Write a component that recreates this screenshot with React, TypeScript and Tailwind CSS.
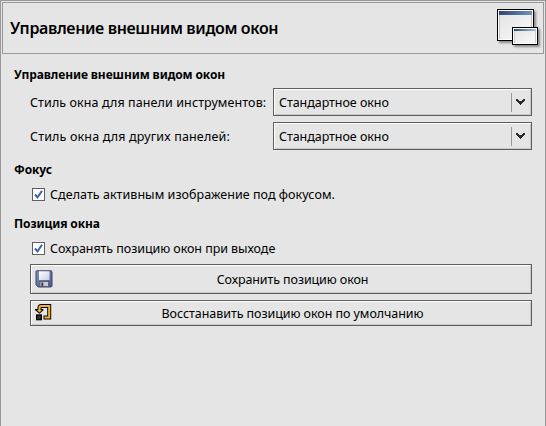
import type { ReactNode } from "react";

function WindowsIcon() {
  return (
    <svg width="46" height="42" viewBox="0 0 46 42" className="mr-px block shrink-0" shapeRendering="crispEdges">
      <defs>
        <linearGradient id="bar" x1="0" x2="1">
          <stop offset="0" stopColor="#2b4672" />
          <stop offset="1" stopColor="#7490bb" />
        </linearGradient>
        <linearGradient id="barSmall" x1="0" x2="1">
          <stop offset="0" stopColor="#2a5072" />
          <stop offset="1" stopColor="#a5c5dc" />
        </linearGradient>
        <linearGradient id="pane" x1="0" y1="0" x2="1" y2="1">
          <stop offset="0" stopColor="#e2e2e2" />
          <stop offset="1" stopColor="#fafafa" />
        </linearGradient>
        <filter id="soft" x="-20%" y="-20%" width="150%" height="150%">
          <feGaussianBlur stdDeviation="1" />
        </filter>
      </defs>
      <rect x="3" y="3" width="37" height="32" fill="#000" opacity=".4" filter="url(#soft)" />
      <rect x="1" y="1" width="37" height="32" fill="#000" />
      <rect x="2" y="2" width="35" height="30" fill="#fff" />
      <rect x="3" y="3" width="33" height="28" fill="url(#pane)" />
      <rect x="3" y="3" width="33" height="4" fill="url(#bar)" />
      <rect x="3" y="7" width="1" height="24" fill="#c4c4c4" />
      <rect x="35" y="7" width="1" height="24" fill="#c4c4c4" />
      <rect x="18" y="21" width="26" height="18" fill="#000" opacity=".4" filter="url(#soft)" />
      <rect x="16" y="19" width="26" height="18" fill="#000" />
      <rect x="17" y="20" width="24" height="16" fill="#fff" />
      <rect x="18" y="21" width="22" height="14" fill="url(#pane)" />
      <rect x="18" y="21" width="22" height="2" fill="url(#barSmall)" />
      <rect x="18" y="23" width="1" height="12" fill="#ccc" />
      <rect x="39" y="23" width="1" height="12" fill="#ccc" />
    </svg>
  );
}

function FloppyIcon() {
  return (
    <svg width="18" height="18" viewBox="0 0 18 18" className="block">
      <defs>
        <linearGradient id="disk" x1="0" x2="1" y2="1">
          <stop offset="0" stopColor="#8490bc" />
          <stop offset="1" stopColor="#4c588c" />
        </linearGradient>
        <linearGradient id="label" x1="0" x2="1" y2="1">
          <stop offset="0" stopColor="#ffffff" />
          <stop offset="1" stopColor="#c9cfdf" />
        </linearGradient>
      </defs>
      <path d="M1.5 .8H16.2L17 1.6V16.2L16.2 17H3.2L1 14.8V1.3Z" fill="url(#disk)" stroke="#3d4261" strokeWidth="1" />
      <rect x="4" y="1.3" width="10.5" height="8.7" fill="url(#label)" />
      <rect x="5" y="11.5" width="8.5" height="5" fill="#c8cad2" stroke="#444a68" strokeWidth=".7" />
      <rect x="6.3" y="12.5" width="2" height="4" fill="#39415f" />
    </svg>
  );
}

function RevertIcon() {
  return (
    <svg width="17" height="17" viewBox="0 0 17 17" className="block">
      <path d="M4.5 7V3.8Q4.5 2 6.3 2H14.2V13.5H8.5" fill="none" stroke="#000" strokeWidth="4" />
      <path d="M0 5H8.4V6.2L4.5 9.8L0 6Z" fill="#000" />
      <path d="M4.5 7V3.8Q4.5 2 6.3 2H14.2V13.5H9.5" fill="none" stroke="#f5b32e" strokeWidth="2.1" />
      <path d="M1.8 6H7L4.5 8.4Z" fill="#f5b32e" />
      <rect x="1" y="10.3" width="6" height="6" fill="#000" />
      <rect x="2.3" y="11.6" width="3.4" height="3.4" fill="#333" />
    </svg>
  );
}

function Heading({ children, track }: { children: ReactNode; track: string }) {
  return <h2 className={`h-5 pl-[13px] text-[12px] leading-5 font-bold whitespace-nowrap ${track}`}>{children}</h2>;
}

function SelectRow({ label, track }: { label: string; track: string }) {
  return (
    <div className="flex h-7 items-center justify-between pr-[13px] pl-[29px]">
      <span className={`pt-0.5 whitespace-nowrap ${track}`}>{label}</span>
      <button className="flex h-7 w-[259px] items-center border border-[#5e5e5e] pl-[5px] text-left shadow-[inset_1px_1px_0_#fff,inset_-1px_-1px_0_#c8c8c8]">
        <span className="flex-1 pt-0.5 tracking-[-0.05px] whitespace-nowrap">Стандартное окно</span>
        <span className="h-[19px] w-px bg-[#9a9a9a]" />
        <span className="w-[19px] pl-1">
          <svg width="9" height="6" viewBox="0 0 9 6" className="block" shapeRendering="crispEdges">
            <path d="M0 0H2V1H3V2H6V1H7V0H9V2H8V3H7V4H6V5H5V6H4V5H3V4H2V3H1V2H0Z" fill="#2b2b2b" />
          </svg>
        </span>
      </button>
    </div>
  );
}

function Check({ label, track }: { label: string; track: string }) {
  return (
    <label className="flex h-5 items-center pl-[31px]">
      <span className="flex h-[13px] w-[13px] items-center justify-center border border-[#5e5e5e] bg-white">
        <svg width="9" height="9" viewBox="0 0 9 9">
          <path d="M1 4.5L3.5 7.3L8 .8" fill="none" stroke="#3c63b0" strokeWidth="2" />
        </svg>
      </span>
      <span className={`ml-[5px] pt-0.5 whitespace-nowrap ${track}`}>{label}</span>
    </label>
  );
}

function ActionButton({ icon, size, children, track }: { icon: ReactNode; size: string; children: ReactNode; track: string }) {
  return (
    <button className={`ml-[29px] flex w-[502px] items-center border border-[#5e5e5e] pl-1 shadow-[inset_1px_1px_0_#fff,inset_-1px_-1px_0_#c8c8c8] ${size}`}>
      <span className="w-[18px] pb-px">{icon}</span>
      <span className={`flex-1 pt-0.5 pl-[1px] text-center whitespace-nowrap ${track}`}>{children}</span>
    </button>
  );
}

export default function App() {
  return (
    <main className="h-[426px] w-[546px] overflow-hidden border border-b-0 border-[#999] bg-[#e5e5e5] font-['Noto_Sans',sans-serif] text-[12.5px] leading-5 text-black">
      <header className="mx-px mt-px flex h-[52px] justify-between border border-[#999] pt-[5px] pl-[7px]">
        <h1 className="h-10 text-[16px] leading-[41px] font-semibold tracking-[-0.36px] whitespace-nowrap">Управление внешним видом окон</h1>
        <WindowsIcon />
      </header>
      <section className="pt-[11px]">
        <Heading track="tracking-[-0.1px]">Управление внешним видом окон</Heading>
        <div className="mt-[3px] flex flex-col gap-1.5">
          <SelectRow label="Стиль окна для панели инструментов:" track="tracking-[0.1px]" />
          <SelectRow label="Стиль окна для других панелей:" track="tracking-[0.16px]" />
        </div>
      </section>
      <section className="pt-[10px]">
        <Heading track="tracking-[-0.1px]">Фокус</Heading>
        <div className="mt-1">
          <Check label="Сделать активным изображение под фокусом." track="tracking-[0.05px]" />
        </div>
      </section>
      <section className="pt-[10px]">
        <Heading track="tracking-[-0.1px]">Позиция окна</Heading>
        <div className="mt-1">
          <Check label="Сохранять позицию окон при выходе" track="tracking-[-0.06px]" />
        </div>
        <div className="mt-[6px] flex flex-col gap-1.5">
          <ActionButton icon={<FloppyIcon />} size="h-[30px]" track="tracking-[-0.1px]">Сохранить позицию окон</ActionButton>
          <ActionButton icon={<RevertIcon />} size="h-[26px]" track="tracking-[-0.06px]">Восстанавить позицию окон по умолчанию</ActionButton>
        </div>
      </section>
    </main>
  );
}
